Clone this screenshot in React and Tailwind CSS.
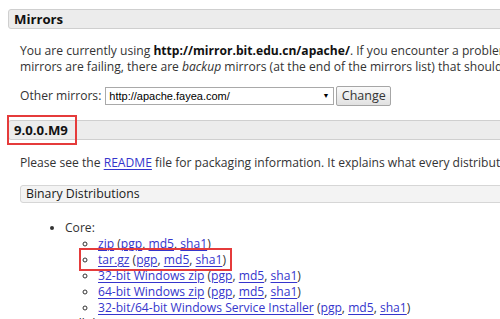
import React from 'react';

const font = { fontFamily: '"Open Sans", "Noto Sans", sans-serif' };

function SectionHeader({ children, className = '' }) {
  return (
    <div
      className={`h-[20px] border border-[#cfcfcf] rounded-[3px] bg-[#ececec] px-[5px] leading-[18px] text-[13.2px] font-bold text-[#111] whitespace-nowrap ${className}`}
    >
      {children}
    </div>
  );
}

function A({ children }) {
  return <a className="text-[#3535cc] underline underline-offset-2">{children}</a>;
}

function Checks() {
  return (
    <>
      (<A>pgp</A>, <A>md5</A>, <A>sha1</A>)
    </>
  );
}

export default function App() {
  const coreItems = [
    { label: 'zip' },
    { label: 'tar.gz' },
    { label: '32-bit Windows zip' },
    { label: '64-bit Windows zip' },
    { label: '32-bit/64-bit Windows Service Installer' },
  ];

  return (
    <div
      className="relative w-[500px] h-[319px] overflow-hidden bg-white text-[12.1px] text-[#333] pt-[9px]"
      style={font}
    >
      <SectionHeader className="ml-[8px] w-[560px]">Mirrors</SectionHeader>

      <div className="mt-[14px] pl-[20px] leading-[16px] whitespace-nowrap">
        <p>
          You are currently using <b className="text-[#111]">http://mirror.bit.edu.cn/apache/</b>. If you
          encounter a problem with this mirror, please select another mirror.
        </p>
        <p>
          mirrors are failing, there are <i>backup</i> mirrors (at the end of the mirrors list) that should be
          available.
        </p>
      </div>

      <div className="mt-[11px] pl-[20px] h-[20px] flex items-center whitespace-nowrap">
        <span>Other mirrors:</span>
        <div className="ml-[4px] w-[229px] h-[18px] border border-[#a9a9a9] bg-white flex items-center justify-between pl-[3px] pr-[4px]">
          <span className="text-[11px] text-black" style={{ fontFamily: '"Liberation Sans", Arial, sans-serif' }}>
            http://apache.fayea.com/
          </span>
          <span className="text-[7px] text-black">▼</span>
        </div>
        <button className="ml-[2px] h-[20px] w-[55px] border border-[#a6a6a6] rounded-[2px] bg-gradient-to-b from-[#fafafa] to-[#e1e1e1] text-[12.5px] text-[#333] leading-[18px]">
          Change
        </button>
      </div>

      <SectionHeader className="mt-[14px] ml-[8px] w-[560px]">9.0.0.M9</SectionHeader>

      <p className="mt-[15px] pl-[20px] leading-[16px] whitespace-nowrap">
        Please see the <A>README</A> file for packaging information. It explains what every distribution contains.
      </p>

      <div className="mt-[14px] ml-[20px] w-[560px] h-[18px] border border-[#d6d6d6] rounded-[3px] bg-[#f3f3f3] px-[5px] leading-[16px] text-[12.3px] text-[#1a1a1a] whitespace-nowrap">
        Binary Distributions
      </div>

      <ul className="mt-[17px] ml-[65px] list-disc leading-[16px] whitespace-nowrap">
        <li>
          Core:
          <ul className="ml-[33px] list-[circle]">
            {coreItems.map((item) => (
              <li key={item.label}>
                <A>{item.label}</A> <Checks />
              </li>
            ))}
          </ul>
        </li>
        <li>Full documentation:</li>
      </ul>

      <div className="absolute left-[7px] top-[115px] w-[70px] h-[30px] border-2 border-[#e53b3b]" />
      <div className="absolute left-[79px] top-[248px] w-[153px] h-[23px] border-2 border-[#e53b3b]" />
    </div>
  );
}
